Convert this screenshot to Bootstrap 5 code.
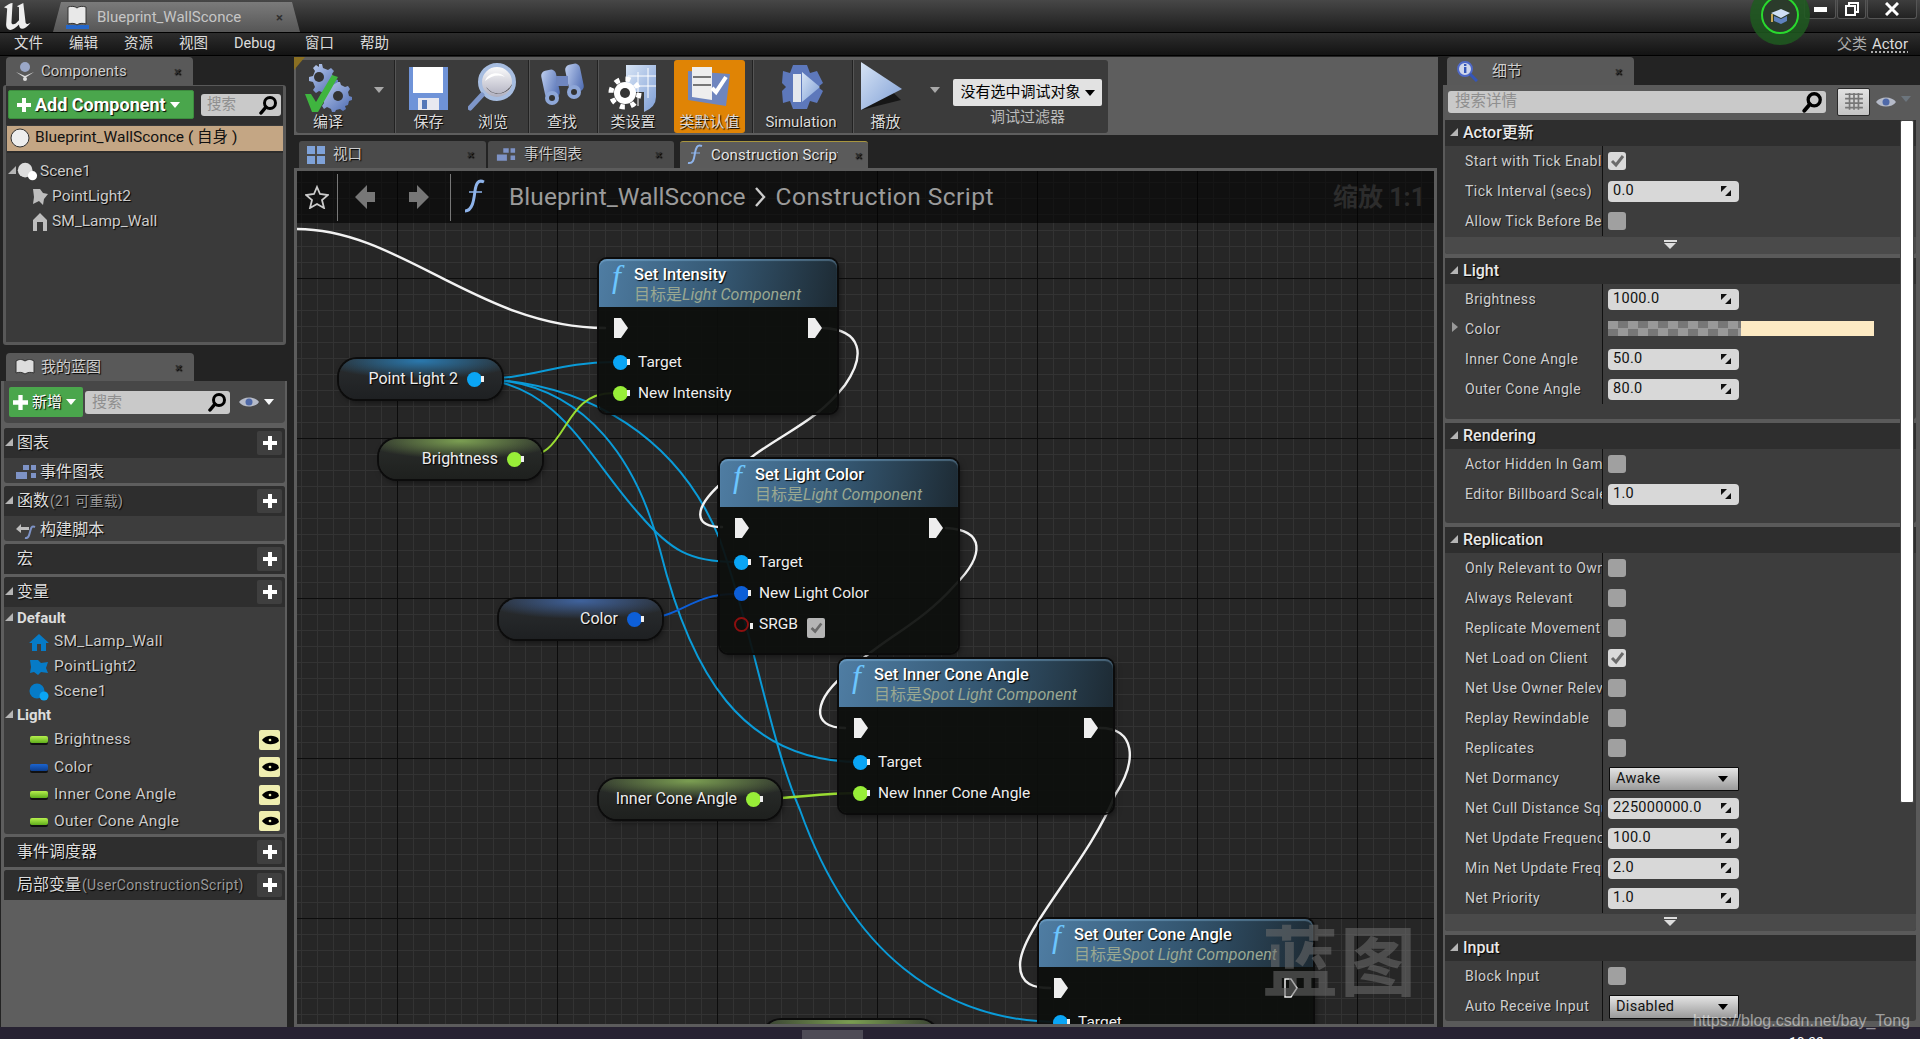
<!DOCTYPE html>
<html lang="zh"><head><meta charset="utf-8"><title>Blueprint_WallSconce</title>
<link href="https://cdn.jsdelivr.net/npm/bootstrap@5.3.0/dist/css/bootstrap.min.css" rel="stylesheet">
<style>
html,body{height:100%;margin:0;background:#232323;overflow:hidden}
body{font-family:Roboto,"Noto Sans CJK SC",sans-serif;font-size:15px;color:#d8d8d8}
.ue-root{width:1920px;height:1039px;position:relative;overflow:hidden}
.ue-title{height:33px;background:linear-gradient(#474747,#1c1c1c);border-bottom:1px solid #000;position:relative}
.ue-logo{width:53px;padding:2px 0 0 1px}
.ue-doc{width:247px;height:30px;margin-top:2px;background:linear-gradient(#7b7b7b,#565656);clip-path:polygon(8px 0,calc(100% - 8px) 0,100% 100%,0 100%);padding-left:13px;color:#c6c6c6;font-size:15px}
.ue-doc .xx{margin-left:auto;margin-right:17px}
.xx{color:#2f2f2f;font-size:13px;font-weight:700;line-height:1}
.ue-winbtns{margin-left:auto;margin-right:3px;height:19px}
.ue-wb{height:19px;border:1px solid #555;border-top:0;border-radius:0 0 3px 3px;background:linear-gradient(#3d3d3d,#222);margin-left:1px;display:flex;align-items:center;justify-content:center;color:#fff}
.wb1{width:32px}.wb2{width:29px}.wb3{width:50px}
.ue-tut{position:absolute;left:1750px;top:-15px;z-index:5}
.ue-menu{height:23px;background:linear-gradient(#2d2d2d,#131313);border-bottom:1px solid #000;font-size:14.5px;color:#dcdcdc;padding-left:14px;position:relative}
.ue-menu span{width:55px;flex:none}
.ue-menu .mdebug{width:71px}
.ue-parent{margin-left:auto;margin-right:12px;font-size:15px;color:#aaa}
.ue-parent u{color:#ddd;text-decoration:underline dotted;text-underline-offset:3px;margin-left:5px}
.ue-main{height:971px;padding-top:1px}
.ue-left{width:294px;flex:none;position:relative}
.ue-center{width:1144px;flex:none}
.ue-right{width:482px;flex:none;padding-left:5px}
.tabx{height:28px;background:#595959;border-radius:4px 4px 0 0;color:#cfcfcf;padding:0 12px 0 9px;text-shadow:1px 1px 1px #000}
.tabx svg{margin-right:6px}
.tabx .xx{margin-left:auto}
.t-comp{width:187px;margin-left:6px}
.t-bp{width:188px;margin-left:6px;margin-top:8px}
.t-det{width:187px;margin-left:4px}
.t-det svg{margin-right:14px}
.comp-panel{margin-left:3px;width:283px;height:260px;background:#3a3a3a;border:3px solid #585858;border-top-width:1px;border-radius:3px}
.comp-bar{height:39px;padding:4px 2px 0 2px;background:#2f2f2f}
.btn.add-btn{width:186px;height:29px;padding:0 0 0 8px;background:#4aa64c;border:1px solid #3c8c3e;border-radius:2px;color:#fff;font-size:18px;font-weight:700;line-height:1;text-shadow:1px 1px 1px #000;margin-right:7px;flex:none;white-space:nowrap}
.sbox{background:#c9c9c9;border-radius:3px;color:#8f8f8f;padding:0 3px 0 6px;flex:none}
.sb-comp{width:80px;height:22px;font-size:14.5px;margin-top:4px}
.sbox svg{margin-left:auto}
.comp-self{height:25px;margin:1px 1px 0;width:276px;background:#c4a684;color:#111;font-size:15.5px;padding-left:3px;box-shadow:0 2px 0 #2c2c2c;padding-bottom:1px}
.comp-self svg{margin-right:5px}
.comp-item{height:25px;color:#ccc;font-size:15.5px;text-shadow:1px 1px 1px #000}
.ci1{margin-top:8px;padding-left:2px}.ci2{padding-left:24px}
.ci1 .tri{margin-right:0}
.ci1 svg,.ci2 svg{margin-right:2px}
.bp-panel{margin-left:1px;width:286px;height:647px;background:#5e5e5e;padding:0 2px 0 3px}
.bp-bar{height:42px;margin:0 0 5px;background:#474747;border-radius:0 0 4px 4px;padding:0 0 0 5px}
.btn.new-btn{width:74px;height:30px;padding:0 0 0 4px;background:#4aa64c;border:0;border-radius:2px;color:#fff;font-size:15px;margin-right:2px;text-shadow:1px 1px 1px #000;flex:none}
.sb-bp{width:145px;height:23px;font-size:15px;padding-left:7px}
.sect{background:#3d3d3d;border-radius:3px;margin-bottom:3px;width:281px}
.sect-h{height:30px;background:#2e2e2e;border-radius:3px 3px 0 0;padding-left:1px;color:#ddd;font-size:16px;text-shadow:1px 1px 1px #000;position:relative}
.sect-h .tri{margin-right:0}
.sect-h small{color:#9a9a9a;font-size:14px;margin-left:1px;letter-spacing:.3px}
.tri{width:0;height:0;border-style:solid;border-width:0 0 8px 8px;border-color:transparent transparent #b5b5b5;margin-right:1px;margin-top:-3px;flex:none}
.no-tri{width:8px;flex:none}
.plusb{width:25px;height:24px;background:#3f3f3f;border:0;border-radius:2px;color:#fff;position:absolute;right:3px;top:3px;padding:0;display:flex;align-items:center;justify-content:center}
.s-row{height:25px;padding:2px 0 0 11px;color:#ddd;font-size:16px;letter-spacing:.1px;text-shadow:1px 1px 1px #000}
.s-row svg{margin-right:3px}
.v-grp{height:22px;padding-left:1px;font-weight:700;color:#ddd;font-size:15px}
.v-grp .tri{margin-right:0}
.v-it{height:25px;padding-left:25px;color:#ccc;font-size:15.5px;letter-spacing:.3px;text-shadow:1px 1px 1px #000}
.v-it2{height:27.5px}
.v-it2:last-child{height:25.5px}
.v-it svg{margin-right:5px;flex:none}
.vbar{width:18px;height:7px;border-radius:2px;margin-right:6px;margin-left:1px;flex:none;box-shadow:0 2px 0 #111}
.vb-g{background:linear-gradient(#b6f04d,#5fae1c)}
.vb-b{background:linear-gradient(#1b64d0,#0e3e8c)}
.eyebtn{width:21px;height:20px;background:#efeeb0;border-radius:2px;margin-left:auto;margin-right:5px;display:flex;align-items:center;justify-content:center}
.eyebtn svg{margin:0}
.tb-band{height:78px;background:#5e5e5e;position:relative;padding:3px 0 2px 2px}
.tb-gold{position:absolute;left:0;top:0;border-style:solid;border-width:13px 11px 0 0;border-color:#8a6f22 transparent transparent}
.tb-dark{width:812px;height:73px;background:#3b3b3b;border-radius:3px}
.tb-sep{width:1px;height:73px;background:#222;box-shadow:1px 0 0 #555;flex:none}
.tb-btn{height:73px;color:#dcdcdc;font-size:15px;line-height:1;padding-top:2px;text-shadow:1px 1px 1px #000;flex:none}
.tb-btn svg{display:block;height:50px}
.tb-btn>span{margin-top:3px;white-space:nowrap}
.tb-on{background:#e08405;border-radius:3px;width:71px}
.w76{width:76px}
.w41{width:41px}
.m6{margin-left:6px}.m7{margin-left:7px}.m8{margin-left:8px}.m9{margin-left:9px}.m10{margin-left:10px}.m11{margin-left:11px}.m13{margin-left:13px}.m16{margin-left:16px}.m19{margin-left:19px}.m20{margin-left:20px}.m28{margin-left:28px}
.tb-arrow{width:0;height:0;border-style:solid;border-width:6px 5px 0;border-color:#a8a8a8 transparent transparent;flex:none;margin-bottom:14px}
.dbg-wrap{align-self:flex-start;margin-top:19px}
.btn.dbg-btn{width:149px;height:27px;padding:0;background:#e2e2e2;border:0;border-radius:2px;color:#000;font-size:15px;line-height:1}
.dbg-lab{color:#bbb;font-size:15px;line-height:1;margin-top:4px}
.dn{display:inline-block;width:0;height:0;border-style:solid;border-width:6px 5px 0;border-color:currentColor transparent transparent;margin-left:4px}
.tabs-row{height:27px;margin-top:6px;padding-left:5px}
.g-tab{width:187px;height:27px;background:#4a4a4a;border-radius:3px 3px 0 0;color:#ccc;margin-right:2px;padding:0 12px 0 8px;font-size:14.5px;text-shadow:1px 1px 1px #000}
.g-tab .xx{margin-left:auto}
.g-tab2{width:186px}
.g-tab3{width:188px;margin-left:4px;background:#5b5b5b;border-top:1px solid #a8953e;color:#e6e6e6;padding-left:5px;padding-right:6px;font-size:15px}
.g-tab3 svg{margin-right:6px}
.clip-t{width:127px;overflow:hidden;white-space:nowrap;flex:none;letter-spacing:.15px}
.graph{height:859px;width:1143px;border:3px solid #5c5c5c;position:relative;overflow:hidden;background-color:#262626;
background-image:linear-gradient(#0c0c0c 1px,transparent 1px),linear-gradient(90deg,#0c0c0c 1px,transparent 1px),linear-gradient(#333 1px,transparent 1px),linear-gradient(90deg,#333 1px,transparent 1px);
background-size:160px 160px,160px 160px,16px 16px,16px 16px;background-position:0 107px,100px 0,0 11px,4px 0}
.g-head{height:52px;background:rgba(0,0,0,.58);position:relative;z-index:3;padding-left:4px;color:#999}
.g-sep{width:1px;height:47px;background:#777;flex:none}
.g-crumb{font-size:24.5px;color:#9b9b9b;letter-spacing:.05px}
.g-f{margin-left:10px}
.g-c1{margin-left:20px}
.g-chev{margin:0 10px 0 8px}
.g-c2{letter-spacing:.45px}
.g-zoom{position:absolute;right:9px;top:8px;font-size:25px;font-weight:700;color:#2c2c2c}
.wires{position:absolute;left:0;top:0;width:1137px;height:853px;z-index:1}
.gnode{position:absolute;z-index:2;background:rgba(13,15,13,.93);border-radius:8px;box-shadow:0 0 0 2px #0b0b0b,2px 3px 6px rgba(0,0,0,.5);color:#eee;font-size:15.5px}
.n1{left:302px;top:88px;width:238px;height:154px}
.n2{left:423px;top:288px;width:238px;height:194px}
.n3{left:542px;top:488px;width:274px;height:154px}
.n4{left:742px;top:748px;width:274px;height:154px}
.n-hd{height:48px;border-radius:8px 8px 0 0;background:linear-gradient(100deg,#4f7da3 0%,#355873 50%,#1d2a33 100%);position:relative;padding:6px 0 0 35px;box-shadow:inset 0 2px 1px rgba(150,200,240,.35)}
.n-f{position:absolute;left:13px;top:-1px;font:italic 400 32px "Liberation Serif",serif;color:#6cc6ff}
.n-t{font-size:16.5px;font-weight:500;color:#fff;line-height:20px;text-shadow:1px 1px 1px #000}
.n-s{font-size:16px;font-style:italic;color:#9aa892;line-height:19px;white-space:nowrap}
.n-s b{font-weight:400;font-style:normal}
.n-ex{height:40px;padding:2px 15px 0}
.n-p{height:31px;padding-left:14px;gap:10px;text-shadow:1px 1px 1px #000}
.exec{width:14px;height:20px;background:#eee;clip-path:polygon(0 0,50% 0,100% 50%,50% 100%,0 100%);flex:none}
.exec-h{background:none;clip-path:none;flex:none}
.pdot{width:15px;height:15px;border-radius:50%;position:relative;flex:none}
.pdot::after{content:"";position:absolute;left:14px;top:4px;border-style:solid;border-width:3.5px 0 3.5px 3px;border-color:transparent transparent transparent inherit}
.pc-obj{background:#0aa5f5;border-color:#0aa5f5}
.pc-flt{background:#98ee38;border-color:#98ee38}
.pc-col{background:#0d5fd8;border-color:#0d5fd8}
.pc-red{background:none;border:2.5px solid #8c0f0f}
.nchk{width:18px;height:20px;background:#b5b5b5;border-radius:2px;margin-left:-1px;display:flex;align-items:center;justify-content:center;margin-top:6px}
.gpill{position:absolute;z-index:2;height:40px;border-radius:18px;box-shadow:0 0 0 2px #0c0c0c,2px 3px 6px rgba(0,0,0,.5);color:#eee;padding-right:20px;gap:9px;font-size:16px;text-shadow:1px 1px 1px #000}
.pl1{left:42px;top:188px;width:163px;background:radial-gradient(60% 45% at 50% 5%,#2a78ad,transparent),linear-gradient(#2b2e30,#1e2022)}
.pl2{left:82px;top:268px;width:163px;background:radial-gradient(60% 45% at 50% 5%,#7b9e52,transparent),linear-gradient(#2b2e2c,#1e201e)}
.pl3{left:202px;top:428px;width:163px;background:radial-gradient(60% 45% at 50% 5%,#3f629c,transparent),linear-gradient(#2b2e30,#1e2022)}
.pl4{left:302px;top:608px;width:182px;background:radial-gradient(60% 45% at 50% 5%,#7b9e52,transparent),linear-gradient(#2b2e2c,#1e201e)}
.pl5{left:466px;top:849px;width:175px;background:radial-gradient(60% 45% at 50% 5%,#7b9e52,transparent),linear-gradient(#2b2e2c,#1e201e)}
.g-mark{position:absolute;z-index:3;right:16px;bottom:22px;font-size:76px;font-weight:700;letter-spacing:2px;line-height:1;color:rgba(110,110,110,.55)}
.det-panel{height:942px;background:#5a5a5a;padding:3px 0 0 2px;position:relative;width:477px}
.sb-det{width:378px;height:22px;margin:3px 0 0 3px;font-size:15.5px;padding-left:7px}
.gridb{width:33px;height:28px;margin:0 0 0 11px;background:linear-gradient(#e2e2e2,#c4c4c4);border:1px solid #2a2a2a;border-radius:2px;display:flex;align-items:center;justify-content:center;flex:none}
.det-top{height:32px;margin-top:0}
.det-eye{flex:none;margin:7px 0 0 5px}
.dsec{width:471px;background:#3d3d3d;margin-bottom:4px;border-radius:3px}
.dh{height:26px;background:#2e2e2e;padding-left:5px;color:#e8e8e8;font-weight:500;font-size:16px;text-shadow:1px 1px 1px #000}
.dh .tri{margin-right:5px}
.dr{height:30px;position:relative}
.dl{width:158px;height:100%;flex:none;padding-left:20px;overflow:hidden;white-space:nowrap;border-right:1px solid #111;color:#cfcfcf;font-size:14px;letter-spacing:.45px;line-height:30px;text-shadow:1px 1px 0 #1c1c1c}
.dv{padding-left:5px}
.cb{width:18px;height:18px;background:#a0a0a0;border-radius:3px;margin-left:0;display:flex;align-items:center;justify-content:center}
.cb-on{background:#d9d9d9}
.spin{width:131px;height:21px;background:#d8d8d8;border-radius:4px;color:#111;font-size:14.5px;padding:0 7px 0 5px;letter-spacing:.3px}
.spin svg{margin-left:auto}
.ddrop{width:130px;height:24px;margin:2px 0 0 1px;background:linear-gradient(#e4e4e4,#9a9a9a);border:1px solid #0c0c0c;border-radius:1px;color:#111;font-size:14.5px;padding:0 10px 0 6px;letter-spacing:.3px}
.ddrop .dn{margin-left:auto;color:#000}
.colorbar{width:266px;height:15px;background:linear-gradient(90deg,transparent 50%,#fdeac3 50%),repeating-conic-gradient(#777 0 25%,#999 0 50%) 0 0/20px 15px;margin-top:-2px}
.ctri{position:absolute;left:7px;top:8px;border-style:solid;border-width:5px 0 5px 6px;border-color:transparent transparent transparent #999}
.dexp{height:17px;background:#4a4a4a;margin-top:1px;border-radius:0 0 3px 3px;position:relative}
.dexp::before{content:"";position:absolute;left:219px;top:3px;width:13px;height:2px;background:#ddd}
.dexp::after{content:"";position:absolute;left:219px;top:6px;border-style:solid;border-width:6px 6.5px 0;border-color:#ddd transparent transparent}
.dpb15{padding-bottom:15px}.dpb13{padding-bottom:14px}
.scr{position:absolute;left:457px;top:35px;width:14px;height:683px;background:#fff;border:1px solid #444;border-radius:2px;z-index:3}
.csdn{position:absolute;right:10px;bottom:-3px;z-index:6;font-family:"Liberation Sans",sans-serif;font-size:16px;color:rgba(255,255,255,.5);line-height:1.2}
.ue-status{height:12px;background:#272232;position:relative;overflow:hidden}
.st-btn{position:absolute;left:802px;top:3px;width:61px;height:9px;background:#4e4b56}
.st-clock{position:absolute;left:1789px;top:8px;font-size:14px;color:#fff;line-height:1.2}
.defs{position:absolute;width:0;height:0}
</style></head><body>
<svg class="defs"><defs>
<linearGradient id="gb" x1="0" y1="0" x2="1" y2="1"><stop offset="0" stop-color="#c0d0f0"/><stop offset="1" stop-color="#4a68b0"/></linearGradient>
<linearGradient id="gw" x1="0" y1="0" x2="0" y2="1"><stop offset="0" stop-color="#fff"/><stop offset="1" stop-color="#aab"/></linearGradient>
<linearGradient id="gp" x1="0" y1="0" x2="1" y2="1"><stop offset="0" stop-color="#d7e4f5"/><stop offset="1" stop-color="#7f9fd6"/></linearGradient>
<symbol id="mag" viewBox="0 0 20 20"><circle cx="12" cy="8" r="5.5" fill="none" stroke="#000" stroke-width="3"/><path d="M8 12 3 18" stroke="#000" stroke-width="3.5" stroke-linecap="round"/></symbol>
<symbol id="spin" viewBox="0 0 12 12"><path d="M1 1h6L1 7zM11 11H5l6-6z" fill="#111"/></symbol>
<symbol id="chk" viewBox="0 0 18 18"><path d="M4 9l4 4 7-9" fill="none" stroke="#6a6a6a" stroke-width="3"/></symbol>
<symbol id="eye" viewBox="0 0 22 14"><path d="M1 7C5 1 17 1 21 7 17 13 5 13 1 7z" fill="#b5bac8"/><circle cx="11" cy="7" r="3.5" fill="#4f69a8"/></symbol>
<symbol id="eyeb" viewBox="0 0 20 12"><path d="M1 6C5 0 15 0 19 4L20 7C15 12 5 12 1 6z" fill="#000"/><circle cx="10" cy="6" r="1.5" fill="#efeeb0"/></symbol>
<symbol id="plus" viewBox="0 0 14 14"><path d="M5 0h4v5h5v4H9v5H5V9H0V5h5z" fill="#fff"/></symbol>
<symbol id="sph" viewBox="0 0 24 22"><circle cx="10" cy="9" r="8" fill="#ddd"/><circle cx="18" cy="15" r="5" fill="#fff"/></symbol>
</defs></svg>
<div class="ue-root d-flex flex-column">
 <div class="ue-title d-flex">
  <div class="ue-logo"><svg width="36" height="29" viewBox="0 0 30 27"><path d="M1 5C4 3 7 1 9 1L8 19c0 2 2 2 4 1l3-3V5l-2-1 6-3 2 17c0 3 2 3 5 1-3 4-6 6-8 6-2 0-3-2-3-4-3 3-6 5-8 5-3 0-4-3-4-5L4 6z" fill="#eee"/></svg></div>
  <div class="ue-doc d-flex align-items-center"><svg width="23" height="26" viewBox="0 0 23 26" class="me-2"><rect y="21" width="23" height="4" fill="#2567c9"/><path d="M2 3c3-1 7-1 9 1 2-2 6-2 9-1v17c-3-1-7-1-9 1-2-2-6-2-9-1z" fill="#e8e8e8" stroke="#333"/></svg>Blueprint_WallSconce<span class="xx">×</span></div>
  <div class="ue-winbtns d-flex">
   <div class="ue-wb wb1"><svg width="13" height="5"><rect width="13" height="5" fill="#fff"/></svg></div>
   <div class="ue-wb wb2"><svg width="14" height="14" viewBox="0 0 14 14"><path d="M4 1h9v9H10V4H4zM1 4h9v9H1z" fill="none" stroke="#fff" stroke-width="2"/></svg></div>
   <div class="ue-wb wb3"><svg width="14" height="14" viewBox="0 0 14 14"><path d="M1 1l12 12M13 1 1 13" stroke="#fff" stroke-width="3"/></svg></div>
  </div>
  <svg class="ue-tut" width="61" height="61" viewBox="0 0 61 61"><circle cx="30" cy="30" r="30" fill="#1f5a20" opacity=".85"/><circle cx="30" cy="30" r="18" fill="#2b3b2b" stroke="#29d92e" stroke-width="2"/><path d="M21 28l10-4 9 4-9 5z" fill="#cfe0f5"/><path d="M24 31v5l7 3 6-3v-5l-6 3z" fill="#5f82bf"/><path d="M22 29v8" stroke="#c8a858" stroke-width="2"/></svg>
 </div>
 <div class="ue-menu d-flex align-items-center"><span>文件</span><span>编辑</span><span>资源</span><span>视图</span><span class="mdebug">Debug</span><span>窗口</span><span>帮助</span><div class="ue-parent">父类<u>Actor</u></div></div>
 <div class="ue-main d-flex">
  <div class="ue-left">
   <div class="tabx t-comp d-flex align-items-center"><svg width="20" height="22" viewBox="0 0 20 22"><circle cx="10" cy="7" r="5" fill="#9aa7c7"/><path d="M1 12l9 4 9-4-9 6z" fill="#ddd"/><circle cx="10" cy="19" r="2" fill="#ddd"/></svg>Components<span class="xx">×</span></div>
   <div class="comp-panel">
    <div class="comp-bar d-flex"><button class="btn add-btn d-flex align-items-center"><svg width="14" height="14" class="me-1"><use href="#plus"/></svg>Add Component<span class="dn"></span></button><div class="sbox sb-comp d-flex align-items-center">搜索<svg width="20" height="20"><use href="#mag"/></svg></div></div>
    <div class="comp-self d-flex align-items-center"><svg width="20" height="22" viewBox="0 0 20 22"><circle cx="10" cy="11" r="9" fill="#eee" stroke="#333"/></svg>Blueprint_WallSconce ( 自身 )</div>
    <div class="comp-item ci1 d-flex align-items-center"><span class="tri"></span><svg width="22" height="22"><use href="#sph"/></svg>Scene1</div>
    <div class="comp-item ci2 d-flex align-items-center"><svg width="20" height="20" viewBox="0 0 20 20"><path d="M3 2h7l3 4 5 1-4 5-1 6-4-4-6 3 1-7z" fill="#bdbdbd"/></svg>PointLight2</div>
    <div class="comp-item ci2 d-flex align-items-center"><svg width="20" height="20" viewBox="0 0 20 20"><path d="M10 1l7 7v11h-4V10H7v9H3V8z" fill="#bdbdbd"/></svg>SM_Lamp_Wall</div>
   </div>
   <div class="tabx t-bp d-flex align-items-center"><svg width="20" height="18" viewBox="0 0 20 18"><path d="M1 3c3-2 6-2 9 0 3-2 6-2 9 0v12c-3-1-6-1-9 1-3-2-6-2-9-1z" fill="#ddd" stroke="#333"/></svg>我的蓝图<span class="xx">×</span></div>
   <div class="bp-panel">
    <div class="bp-bar d-flex align-items-center"><button class="btn new-btn d-flex align-items-center"><svg width="15" height="15" class="me-1"><use href="#plus"/></svg>新增<span class="dn ms-1"></span></button><div class="sbox sb-bp d-flex align-items-center">搜索<svg width="20" height="20"><use href="#mag"/></svg></div><svg width="22" height="14" class="ms-2"><use href="#eye"/></svg><span class="dn text-light ms-1"></span></div>
    <div class="sect"><div class="sect-h d-flex align-items-center"><span class="tri"></span><span class="ms-1">图表</span><button class="plusb"><svg width="14" height="14"><use href="#plus"/></svg></button></div>
     <div class="s-row d-flex align-items-center"><svg width="22" height="16" viewBox="0 0 22 16"><path d="M8 1h6v5H8zM16 1h5v5h-5zM1 8h11v7H1zM16 9h5v5h-5z" fill="#7e93c6"/></svg>事件图表</div></div>
    <div class="sect"><div class="sect-h d-flex align-items-center"><span class="tri"></span><span class="ms-1">函数</span><small>(21 可重载)</small><button class="plusb"><svg width="14" height="14"><use href="#plus"/></svg></button></div>
     <div class="s-row d-flex align-items-center"><svg width="22" height="18" viewBox="0 0 22 18"><path d="M1 8l5-5v3h8v3H6v3z" fill="#bdbdbd"/><path d="M20 6c-4-2-4 2-5 5s-1 7-5 6" fill="none" stroke="#7e93c6" stroke-width="2"/></svg>构建脚本</div></div>
    <div class="sect"><div class="sect-h d-flex align-items-center"><span class="no-tri"></span><span class="ms-1">宏</span><button class="plusb"><svg width="14" height="14"><use href="#plus"/></svg></button></div></div>
    <div class="sect"><div class="sect-h d-flex align-items-center"><span class="tri"></span><span class="ms-1">变量</span><button class="plusb"><svg width="14" height="14"><use href="#plus"/></svg></button></div>
     <div class="v-grp d-flex align-items-center"><span class="tri"></span><span class="ms-1">Default</span></div>
     <div class="v-it d-flex align-items-center"><svg width="20" height="18" viewBox="0 0 20 18"><path d="M10 1 20 10h-3v8H3v-8H0zM8 11v7h4v-7z" fill="#067bc7"/></svg>SM_Lamp_Wall</div>
     <div class="v-it d-flex align-items-center"><svg width="20" height="18" viewBox="0 0 20 18"><path d="M1 2h8l3 3 7-1-2 6 2 5-7-1-3 3-4-3-4 1 1-6z" fill="#067bc7"/></svg>PointLight2</div>
     <div class="v-it d-flex align-items-center"><svg width="20" height="18" viewBox="0 0 20 18"><circle cx="8" cy="8" r="7.5" fill="#067bc7"/><circle cx="15" cy="13" r="4.5" fill="#0aa5f5"/></svg>Scene1</div>
     <div class="v-grp d-flex align-items-center"><span class="tri"></span><span class="ms-1">Light</span></div>
     <div class="v-it v-it2 d-flex align-items-center"><span class="vbar vb-g"></span>Brightness<span class="eyebtn"><svg width="18" height="12"><use href="#eyeb"/></svg></span></div>
     <div class="v-it v-it2 d-flex align-items-center"><span class="vbar vb-b"></span>Color<span class="eyebtn"><svg width="18" height="12"><use href="#eyeb"/></svg></span></div>
     <div class="v-it v-it2 d-flex align-items-center"><span class="vbar vb-g"></span>Inner Cone Angle<span class="eyebtn"><svg width="18" height="12"><use href="#eyeb"/></svg></span></div>
     <div class="v-it v-it2 d-flex align-items-center"><span class="vbar vb-g"></span>Outer Cone Angle<span class="eyebtn"><svg width="18" height="12"><use href="#eyeb"/></svg></span></div>
    </div>
    <div class="sect"><div class="sect-h d-flex align-items-center"><span class="no-tri"></span><span class="ms-1">事件调度器</span><button class="plusb"><svg width="14" height="14"><use href="#plus"/></svg></button></div></div>
    <div class="sect"><div class="sect-h d-flex align-items-center"><span class="no-tri"></span><span class="ms-1">局部变量</span><small>(UserConstructionScript)</small><button class="plusb"><svg width="14" height="14"><use href="#plus"/></svg></button></div></div>
   </div>
  </div>
  <div class="ue-center">
   <div class="tb-band">
    <span class="tb-gold"></span>
    <div class="tb-dark d-flex align-items-center">
     <div class="tb-btn d-flex flex-column align-items-center m6"><svg width="52" height="50" viewBox="0 0 52 50"><path d="M17 2l3 0 1 4 5 2 3-2 3 3-2 3 2 5 4 1v4l-4 1-2 5-8 3-5-2-3 2-3-3 2-3-2-5-4-1v-4l4-1 2-5-2-3 3-3 3 2z" fill="url(#gb)"/><circle cx="17" cy="15" r="5" fill="#333"/><path d="M36 20l2 0 1 3 4 2 3-1 2 3-2 3 1 4 3 1v3l-3 1-1 4-3 1 1 3-3 2-3-2-4 1-1 2h-3l-1-3-4-2-3 2-2-3 2-3-1-4-3-1v-3l3-1 1-4z" fill="url(#gb)"/><circle cx="36" cy="34" r="5" fill="#333"/><path d="M3 32l6 0 5 8L30 13l6 2-20 35H10z" fill="#3fb53f"/></svg><span>编译</span></div>
     <span class="tb-arrow m20"></span><span class="tb-sep m10"></span>
     <div class="tb-btn d-flex flex-column align-items-center m13"><svg width="41" height="50" viewBox="0 0 41 50"><path d="M1 5h39v43H1z" fill="#6f93d8"/><rect x="5" y="5" width="30" height="26" fill="#fff"/><rect x="10" y="36" width="21" height="12" fill="#e8e8f0"/><rect x="14" y="38" width="5" height="9" fill="#5678b8"/></svg><span>保存</span></div>
     <div class="tb-btn d-flex flex-column align-items-center m19"><svg width="50" height="50" viewBox="0 0 50 50"><circle cx="29" cy="20" r="17" fill="url(#gw)" stroke="#a7bde0" stroke-width="4"/><path d="M17 19c3-9 15-10 20-4-7-3-14-1-20 4z" fill="#fff"/><path d="M14 33 2 46" stroke="#7e96c9" stroke-width="5" stroke-linecap="round"/><path d="M18 25c8 10 20 8 26-3-2 9-18 15-26 3z" fill="#333"/></svg><span>浏览</span></div>
     <span class="tb-sep m10"></span>
     <div class="tb-btn d-flex flex-column align-items-center m9"><svg width="48" height="50" viewBox="0 0 48 50"><g fill="url(#gb)"><rect x="5" y="8" width="15" height="28" rx="5" transform="rotate(-12 12 22)"/><rect x="29" y="2" width="15" height="28" rx="5" transform="rotate(-12 36 16)"/></g><rect x="18" y="14" width="12" height="10" fill="#6f86bf"/><circle cx="14" cy="36" r="7" fill="#8ea7d8"/><circle cx="36" cy="30" r="7" fill="#8ea7d8"/><circle cx="14" cy="36" r="3" fill="#333"/><circle cx="36" cy="30" r="3" fill="#333"/></svg><span>查找</span></div>
     <span class="tb-sep m11"></span>
     <div class="tb-btn d-flex flex-column align-items-center m10"><svg width="50" height="50" viewBox="0 0 50 50"><path d="M18 3h30v32q0 10-12 15V30H18z" fill="url(#gp)"/><path d="M30 10v34M40 6v30M20 14h28M20 24h28" stroke="#fff" stroke-width="1"/><circle cx="17" cy="31" r="11" fill="#fff"/><circle cx="17" cy="31" r="14" fill="none" stroke="#fff" stroke-width="5" stroke-dasharray="5 6"/><circle cx="17" cy="31" r="5" fill="#333"/></svg><span>类设置</span></div>
     <div class="tb-btn tb-on d-flex flex-column align-items-center m16"><svg width="50" height="50" viewBox="0 0 50 50"><path d="M3 9l42 3-4 32-38-6z" fill="#6f86bf"/><path d="M7 5h20v33l-20-3z" fill="#eee"/><path d="M8 15h18M8 23h18" stroke="#777" stroke-width="2"/><path d="M27 26l4 4 10-15" fill="none" stroke="#fff" stroke-width="4"/></svg><span>类默认值</span></div>
     <span class="tb-sep m7"></span>
     <div class="tb-btn w76 d-flex flex-column align-items-center m10"><svg width="50" height="50" viewBox="0 0 50 50"><path d="M17 3h14l3 8 7-2 6 12-5 4 5 4-6 12-7-2-3 8H17l-3-8-7 2-1-12 4-4-4-4 1-12 7 2z" fill="#5d78bb"/><rect x="17" y="12" width="8" height="28" fill="#e4e8ee"/><path d="M26 10 44 25 26 40z" fill="url(#gp)"/></svg><span>Simulation</span></div>
     <span class="tb-sep m13"></span>
     <div class="tb-btn w41 d-flex flex-column align-items-center m8"><svg width="41" height="50" viewBox="0 0 41 50"><path d="M0 0 40 38 0 48z" fill="#161616"/><path d="M0 0l41 27L0 48z" fill="url(#gp)"/></svg><span class="ms-2">播放</span></div>
     <span class="tb-arrow m28"></span>
     <div class="dbg-wrap d-flex flex-column align-items-center m13"><button class="btn dbg-btn d-flex align-items-center justify-content-center">没有选中调试对象<span class="dn"></span></button><div class="dbg-lab">调试过滤器</div></div>
    </div>
   </div>
   <div class="tabs-row d-flex">
    <div class="g-tab d-flex align-items-center"><svg width="18" height="18" viewBox="0 0 18 18" class="me-2"><path d="M0 0h8v8H0zM10 0h8v8h-8zM0 10h8v8H0zM10 10h8v8h-8z" fill="#7fa2d8"/></svg>视口<span class="xx">×</span></div>
    <div class="g-tab g-tab2 d-flex align-items-center"><svg width="20" height="15" viewBox="0 0 22 16" class="me-2"><path d="M8 1h6v5H8zM16 1h5v5h-5zM1 8h11v7H1zM16 9h5v5h-5z" fill="#7e93c6"/></svg>事件图表<span class="xx">×</span></div>
    <div class="g-tab g-tab3 d-flex align-items-center"><svg width="20" height="24" viewBox="0 0 20 24"><path d="M17 3c-5-2-6 2-7 7S9 21 3 20" fill="none" stroke="#8eb3ea" stroke-width="2"/><path d="M6 10h9" stroke="#8eb3ea"/></svg><span class="clip-t">Construction Script</span><span class="xx">×</span></div>
   </div>
   <div class="graph">
    <svg class="wires" viewBox="297 171 1137 853" fill="none" stroke-linecap="round">
     <g stroke="#0a9bd8" stroke-width="2">
      <path d="M480 379C530 379 560 362 613 362"/>
      <path d="M480 379C560 385 590 460 640 515C670 550 690 562 735 562"/>
      <path d="M480 379C590 380 640 470 660 550C690 670 740 762 860 762"/>
      <path d="M480 379C590 382 680 440 720 540C755 640 770 740 800 810C850 950 940 1022 1060 1022"/>
     </g>
     <path d="M519 459C570 459 560 393 613 393" stroke="#9adc32" stroke-width="2"/>
     <path d="M760 799C790 799 820 793 860 793" stroke="#9adc32" stroke-width="2.5"/>
     <path d="M640 619C680 619 690 594 735 594" stroke="#0d5fd8" stroke-width="2"/>
     <g stroke="#f2f2f2" stroke-width="2.4">
      <path d="M297 229C400 229 480 328 605 328"/>
      <path d="M823 328C862 330 866 355 845 385C810 430 770 435 725 480C690 510 695 527 722 527"/>
      <path d="M946 528C985 530 985 555 955 585C920 625 880 640 850 670C812 700 810 728 845 728"/>
      <path d="M1100 728C1135 728 1138 760 1115 795C1090 860 1020 930 1020 965C1020 985 1035 988 1050 988"/>
     </g>
    </svg>
    <div class="g-head d-flex align-items-center">
     <svg width="24" height="24" viewBox="0 0 24 24" class="ms-1"><path d="M12 2l3 7 8 1-6 5 2 8-7-4-7 4 2-8-6-5 8-1z" fill="none" stroke="#ccc" stroke-width="1.8"/></svg>
     <span class="g-sep ms-2"></span>
     <svg width="22" height="26" viewBox="0 0 22 26" class="mx-3"><path d="M1 13 13 1v7h8v10h-8v7z" fill="#777"/></svg>
     <svg width="22" height="26" viewBox="0 0 22 26" class="mx-3"><path d="M21 13 9 1v7H1v10h8v7z" fill="#777"/></svg>
     <span class="g-sep ms-1"></span>
     <svg width="28" height="36" viewBox="0 0 28 36" class="g-f"><path d="M23 3c-6-3-8 2-9 9s-2 20-10 20" fill="none" stroke="#8eb3ea" stroke-width="3"/><path d="M8 13h13" stroke="#8eb3ea" stroke-width="1.5"/></svg>
     <span class="g-crumb g-c1">Blueprint_WallSconce</span>
     <svg width="12" height="22" viewBox="0 0 12 22" class="g-chev"><path d="M2 2l8 9-8 9" fill="none" stroke="#ccc" stroke-width="2.4"/></svg>
     <span class="g-crumb g-c2">Construction Script</span>
     <span class="g-zoom">缩放 1:1</span>
    </div>
    <div class="gpill pl1 d-flex align-items-center justify-content-end">Point Light 2<span class="pdot pc-obj"></span></div>
    <div class="gpill pl2 d-flex align-items-center justify-content-end">Brightness<span class="pdot pc-flt"></span></div>
    <div class="gpill pl3 d-flex align-items-center justify-content-end">Color<span class="pdot pc-col"></span></div>
    <div class="gpill pl4 d-flex align-items-center justify-content-end">Inner Cone Angle<span class="pdot pc-flt"></span></div>
    <div class="gpill pl5"></div>
    <div class="gnode n1"><div class="n-hd"><span class="n-f">f</span><div class="n-t">Set Intensity</div><div class="n-s"><b>目标是</b>Light Component</div></div>
     <div class="n-ex d-flex align-items-center justify-content-between"><span class="exec"></span><span class="exec"></span></div>
     <div class="n-p d-flex align-items-center"><span class="pdot pc-obj"></span>Target</div>
     <div class="n-p d-flex align-items-center"><span class="pdot pc-flt"></span>New Intensity</div></div>
    <div class="gnode n2"><div class="n-hd"><span class="n-f">f</span><div class="n-t">Set Light Color</div><div class="n-s"><b>目标是</b>Light Component</div></div>
     <div class="n-ex d-flex align-items-center justify-content-between"><span class="exec"></span><span class="exec"></span></div>
     <div class="n-p d-flex align-items-center"><span class="pdot pc-obj"></span>Target</div>
     <div class="n-p d-flex align-items-center"><span class="pdot pc-col"></span>New Light Color</div>
     <div class="n-p d-flex align-items-center"><span class="pdot pc-red"></span>SRGB<span class="nchk"><svg width="16" height="16"><use href="#chk"/></svg></span></div></div>
    <div class="gnode n3"><div class="n-hd"><span class="n-f">f</span><div class="n-t">Set Inner Cone Angle</div><div class="n-s"><b>目标是</b>Spot Light Component</div></div>
     <div class="n-ex d-flex align-items-center justify-content-between"><span class="exec"></span><span class="exec"></span></div>
     <div class="n-p d-flex align-items-center"><span class="pdot pc-obj"></span>Target</div>
     <div class="n-p d-flex align-items-center"><span class="pdot pc-flt"></span>New Inner Cone Angle</div></div>
    <div class="gnode n4"><div class="n-hd"><span class="n-f">f</span><div class="n-t">Set Outer Cone Angle</div><div class="n-s"><b>目标是</b>Spot Light Component</div></div>
     <div class="n-ex d-flex align-items-center justify-content-between"><span class="exec"></span><svg class="exec-h" width="14" height="20" viewBox="0 0 14 20"><path d="M1 1h6l6 9-6 9H1z" fill="none" stroke="#eee" stroke-width="1.5"/></svg></div>
     <div class="n-p d-flex align-items-center"><span class="pdot pc-obj"></span>Target</div></div>
    <div class="g-mark">蓝图</div>
   </div>
  </div>
  <div class="ue-right">
   <div class="tabx t-det d-flex align-items-center"><svg width="22" height="22" viewBox="0 0 22 22"><circle cx="9" cy="9" r="7" fill="#cfd6ea" stroke="#4f69c8" stroke-width="2"/><path d="M14 14l7 7" stroke="#3556b8" stroke-width="3"/><rect x="8" y="7" width="2.4" height="6" fill="#3556b8"/><rect x="8" y="4" width="2.4" height="2" fill="#3556b8"/></svg>细节<span class="xx">×</span></div>
   <div class="det-panel">
    <div class="det-top d-flex align-items-start"><div class="sbox sb-det d-flex align-items-center">搜索详情<svg width="22" height="22"><use href="#mag"/></svg></div><div class="gridb"><svg width="20" height="20" viewBox="0 0 18 18"><path d="M1 2h16M1 6h16M1 10h16M1 14h16M5 1v15M9 1v15M13 1v15" stroke="#777" stroke-width="1.5"/></svg></div><svg class="det-eye" width="22" height="14"><use href="#eye"/></svg><span class="dn text-secondary ms-1 mt-2 pt-1"></span></div>
    <div class="scr"></div>
    <div class="dsec"><div class="dh d-flex align-items-center"><span class="tri"></span>Actor更新</div>
     <div class="dr d-flex align-items-center"><div class="dl">Start with Tick Enabled</div><div class="dv"><div class="cb cb-on"><svg width="18" height="18"><use href="#chk"/></svg></div></div></div>
     <div class="dr d-flex align-items-center"><div class="dl">Tick Interval (secs)</div><div class="dv"><div class="spin d-flex align-items-center">0.0<svg width="12" height="12"><use href="#spin"/></svg></div></div></div>
     <div class="dr d-flex align-items-center"><div class="dl">Allow Tick Before BeginPlay</div><div class="dv"><div class="cb"></div></div></div>
     <div class="dexp"></div></div>
    <div class="dsec dpb15"><div class="dh d-flex align-items-center"><span class="tri"></span>Light</div>
     <div class="dr d-flex align-items-center"><div class="dl">Brightness</div><div class="dv"><div class="spin d-flex align-items-center">1000.0<svg width="12" height="12"><use href="#spin"/></svg></div></div></div>
     <div class="dr d-flex align-items-center"><span class="ctri"></span><div class="dl">Color</div><div class="dv"><div class="colorbar"></div></div></div>
     <div class="dr d-flex align-items-center"><div class="dl">Inner Cone Angle</div><div class="dv"><div class="spin d-flex align-items-center">50.0<svg width="12" height="12"><use href="#spin"/></svg></div></div></div>
     <div class="dr d-flex align-items-center"><div class="dl">Outer Cone Angle</div><div class="dv"><div class="spin d-flex align-items-center">80.0<svg width="12" height="12"><use href="#spin"/></svg></div></div></div></div>
    <div class="dsec dpb13"><div class="dh d-flex align-items-center"><span class="tri"></span>Rendering</div>
     <div class="dr d-flex align-items-center"><div class="dl">Actor Hidden In Game</div><div class="dv"><div class="cb"></div></div></div>
     <div class="dr d-flex align-items-center"><div class="dl">Editor Billboard Scale</div><div class="dv"><div class="spin d-flex align-items-center">1.0<svg width="12" height="12"><use href="#spin"/></svg></div></div></div></div>
    <div class="dsec"><div class="dh d-flex align-items-center"><span class="tri"></span>Replication</div>
     <div class="dr d-flex align-items-center"><div class="dl">Only Relevant to Owner</div><div class="dv"><div class="cb"></div></div></div>
     <div class="dr d-flex align-items-center"><div class="dl">Always Relevant</div><div class="dv"><div class="cb"></div></div></div>
     <div class="dr d-flex align-items-center"><div class="dl">Replicate Movement</div><div class="dv"><div class="cb"></div></div></div>
     <div class="dr d-flex align-items-center"><div class="dl">Net Load on Client</div><div class="dv"><div class="cb cb-on"><svg width="18" height="18"><use href="#chk"/></svg></div></div></div>
     <div class="dr d-flex align-items-center"><div class="dl">Net Use Owner Relevancy</div><div class="dv"><div class="cb"></div></div></div>
     <div class="dr d-flex align-items-center"><div class="dl">Replay Rewindable</div><div class="dv"><div class="cb"></div></div></div>
     <div class="dr d-flex align-items-center"><div class="dl">Replicates</div><div class="dv"><div class="cb"></div></div></div>
     <div class="dr d-flex align-items-center"><div class="dl">Net Dormancy</div><div class="dv"><div class="ddrop d-flex align-items-center">Awake<span class="dn"></span></div></div></div>
     <div class="dr d-flex align-items-center"><div class="dl">Net Cull Distance Squared</div><div class="dv"><div class="spin d-flex align-items-center">225000000.0<svg width="12" height="12"><use href="#spin"/></svg></div></div></div>
     <div class="dr d-flex align-items-center"><div class="dl">Net Update Frequency</div><div class="dv"><div class="spin d-flex align-items-center">100.0<svg width="12" height="12"><use href="#spin"/></svg></div></div></div>
     <div class="dr d-flex align-items-center"><div class="dl">Min Net Update Frequency</div><div class="dv"><div class="spin d-flex align-items-center">2.0<svg width="12" height="12"><use href="#spin"/></svg></div></div></div>
     <div class="dr d-flex align-items-center"><div class="dl">Net Priority</div><div class="dv"><div class="spin d-flex align-items-center">1.0<svg width="12" height="12"><use href="#spin"/></svg></div></div></div>
     <div class="dexp"></div></div>
    <div class="dsec"><div class="dh d-flex align-items-center"><span class="tri"></span>Input</div>
     <div class="dr d-flex align-items-center"><div class="dl">Block Input</div><div class="dv"><div class="cb"></div></div></div>
     <div class="dr d-flex align-items-center"><div class="dl">Auto Receive Input</div><div class="dv"><div class="ddrop d-flex align-items-center">Disabled<span class="dn"></span></div></div></div></div>
    <div class="csdn">https://blog.csdn.net/bay_Tong</div>
   </div>
  </div>
 </div>
 <div class="ue-status"><span class="st-btn"></span><span class="st-clock">10:32</span></div>
</div>
<script src="https://cdn.jsdelivr.net/npm/bootstrap@5.3.0/dist/js/bootstrap.bundle.min.js"></script>
</body></html>
